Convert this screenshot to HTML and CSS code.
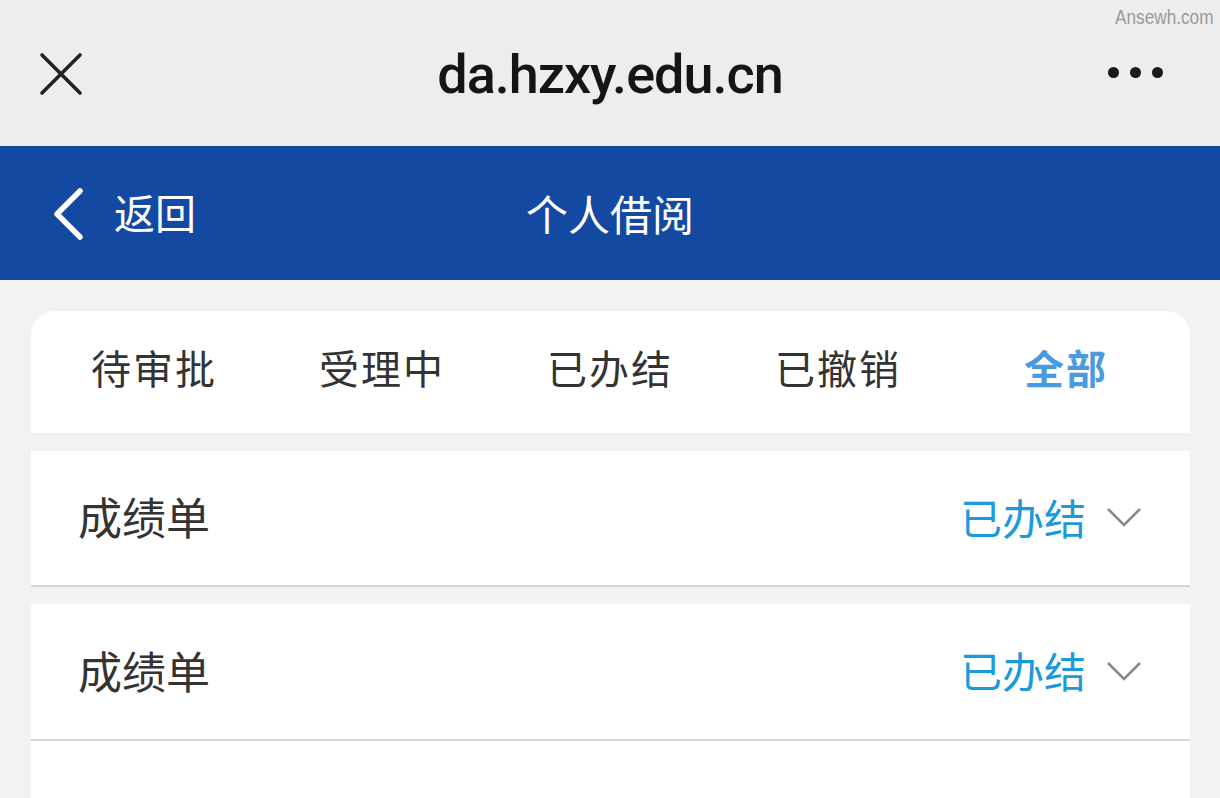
FILE: index.html
```html
<!DOCTYPE html>
<html lang="zh-CN">
<head>
<meta charset="utf-8">
<title>个人借阅</title>
<link rel="stylesheet" href="styles.css">
</head>
<body>
<div class="topbar">
  <svg class="close" width="44" height="44" viewBox="0 0 44 44"><path d="M3 3 L41 41 M41 3 L3 41" stroke="#222" stroke-width="3.6" stroke-linecap="round" fill="none"/></svg>
  <div class="url">da.hzxy.edu.cn</div>
  <div class="dots"><span></span><span></span><span></span></div>
  <div class="watermark">Ansewh.com</div>
</div>
<div class="navbar">
  <div class="back">
    <svg width="32" height="52" viewBox="0 0 32 52"><path d="M28 3 L5 26 L28 49" stroke="#fff" stroke-width="5.5" stroke-linecap="round" stroke-linejoin="round" fill="none"/></svg>
    <span>返回</span>
  </div>
  <div class="title">个人借阅</div>
</div>
<main class="content">
  <div class="tabs">
    <div class="tab">待审批</div>
    <div class="tab">受理中</div>
    <div class="tab">已办结</div>
    <div class="tab">已撤销</div>
    <div class="tab active">全部</div>
  </div>
  <div class="item gap">
    <div class="name">成绩单</div>
    <div class="status">已办结
      <svg width="36" height="22" viewBox="0 0 36 22"><path d="M2 3 L18 19 L34 3" stroke="#8a8a8a" stroke-width="2.6" fill="none"/></svg>
    </div>
  </div>
  <div class="item gap">
    <div class="name">成绩单</div>
    <div class="status">已办结
      <svg width="36" height="22" viewBox="0 0 36 22"><path d="M2 3 L18 19 L34 3" stroke="#8a8a8a" stroke-width="2.6" fill="none"/></svg>
    </div>
  </div>
  <div class="item"></div>
</main>
</body>
</html>
```
FILE: styles.css
```css
* { box-sizing: border-box; }
html, body { margin: 0; padding: 0; }
body {
  width: 1220px;
  height: 798px;
  overflow: hidden;
  background: #f2f2f2;
  font-family: "Noto Sans CJK SC", "Noto Sans", sans-serif;
}
.topbar {
  position: relative;
  height: 146px;
  background: #ededed;
  display: flex;
  align-items: center;
  justify-content: center;
}
.close { position: absolute; left: 39px; top: 52px; }
.url {
  font-family: Roboto, "Noto Sans", sans-serif;
  font-size: 54px;
  font-weight: 500;
  color: #151515;
  letter-spacing: -1px;
  margin-top: 2px;
}
.dots {
  position: absolute;
  right: 57px;
  top: 67px;
  display: flex;
  gap: 11px;
}
.dots span {
  width: 11px; height: 11px;
  border-radius: 50%;
  background: #1a1a1a;
}
.watermark {
  position: absolute;
  right: 7px;
  top: 6px;
  font-family: "Liberation Sans", sans-serif;
  font-size: 20px;
  color: #9a9a9a;
  transform: scaleX(0.86);
  transform-origin: right;
}
.navbar {
  position: relative;
  height: 134px;
  background: #1449a2;
  display: flex;
  align-items: center;
  justify-content: center;
  color: #fff;
}
.back {
  position: absolute;
  left: 52px;
  top: 0;
  bottom: 0;
  display: flex;
  align-items: center;
  gap: 30px;
  font-size: 41px;
}
.back svg { margin-top: 2px; }
.back span { margin-bottom: 4px; }
.title { font-size: 42px; margin-bottom: 2px; }
.content {
  padding: 31px 30px 0 31px;
}
.tabs {
  background: #fff;
  height: 122px;
  border-radius: 24px 24px 0 0;
  display: grid;
  grid-template-columns: repeat(5, 1fr);
  padding: 0 10px 0 9px;
  align-items: center;
}
.tab {
  text-align: center;
  font-size: 40px;
  color: #333;
  letter-spacing: 2px;
  margin-bottom: 10px;
}
.tab.active { color: #4a9ae2; font-weight: 700; }
.item {
  background: #fff;
  height: 137px;
  border-bottom: 2px solid #d6d6d6;
  display: flex;
  align-items: center;
  justify-content: space-between;
  padding: 0 48px 0 47px;
}
.item.gap { margin-top: 17px; }
.tabs + .item { margin-top: 18px; height: 136px; }
.name { font-size: 44px; color: #333; margin-bottom: 4px; }
.status {
  display: flex;
  align-items: center;
  gap: 20px;
  font-size: 42px;
  color: #1a9ad8;
  margin-bottom: 4px;
}
.status svg { margin-top: 2px; }
```
